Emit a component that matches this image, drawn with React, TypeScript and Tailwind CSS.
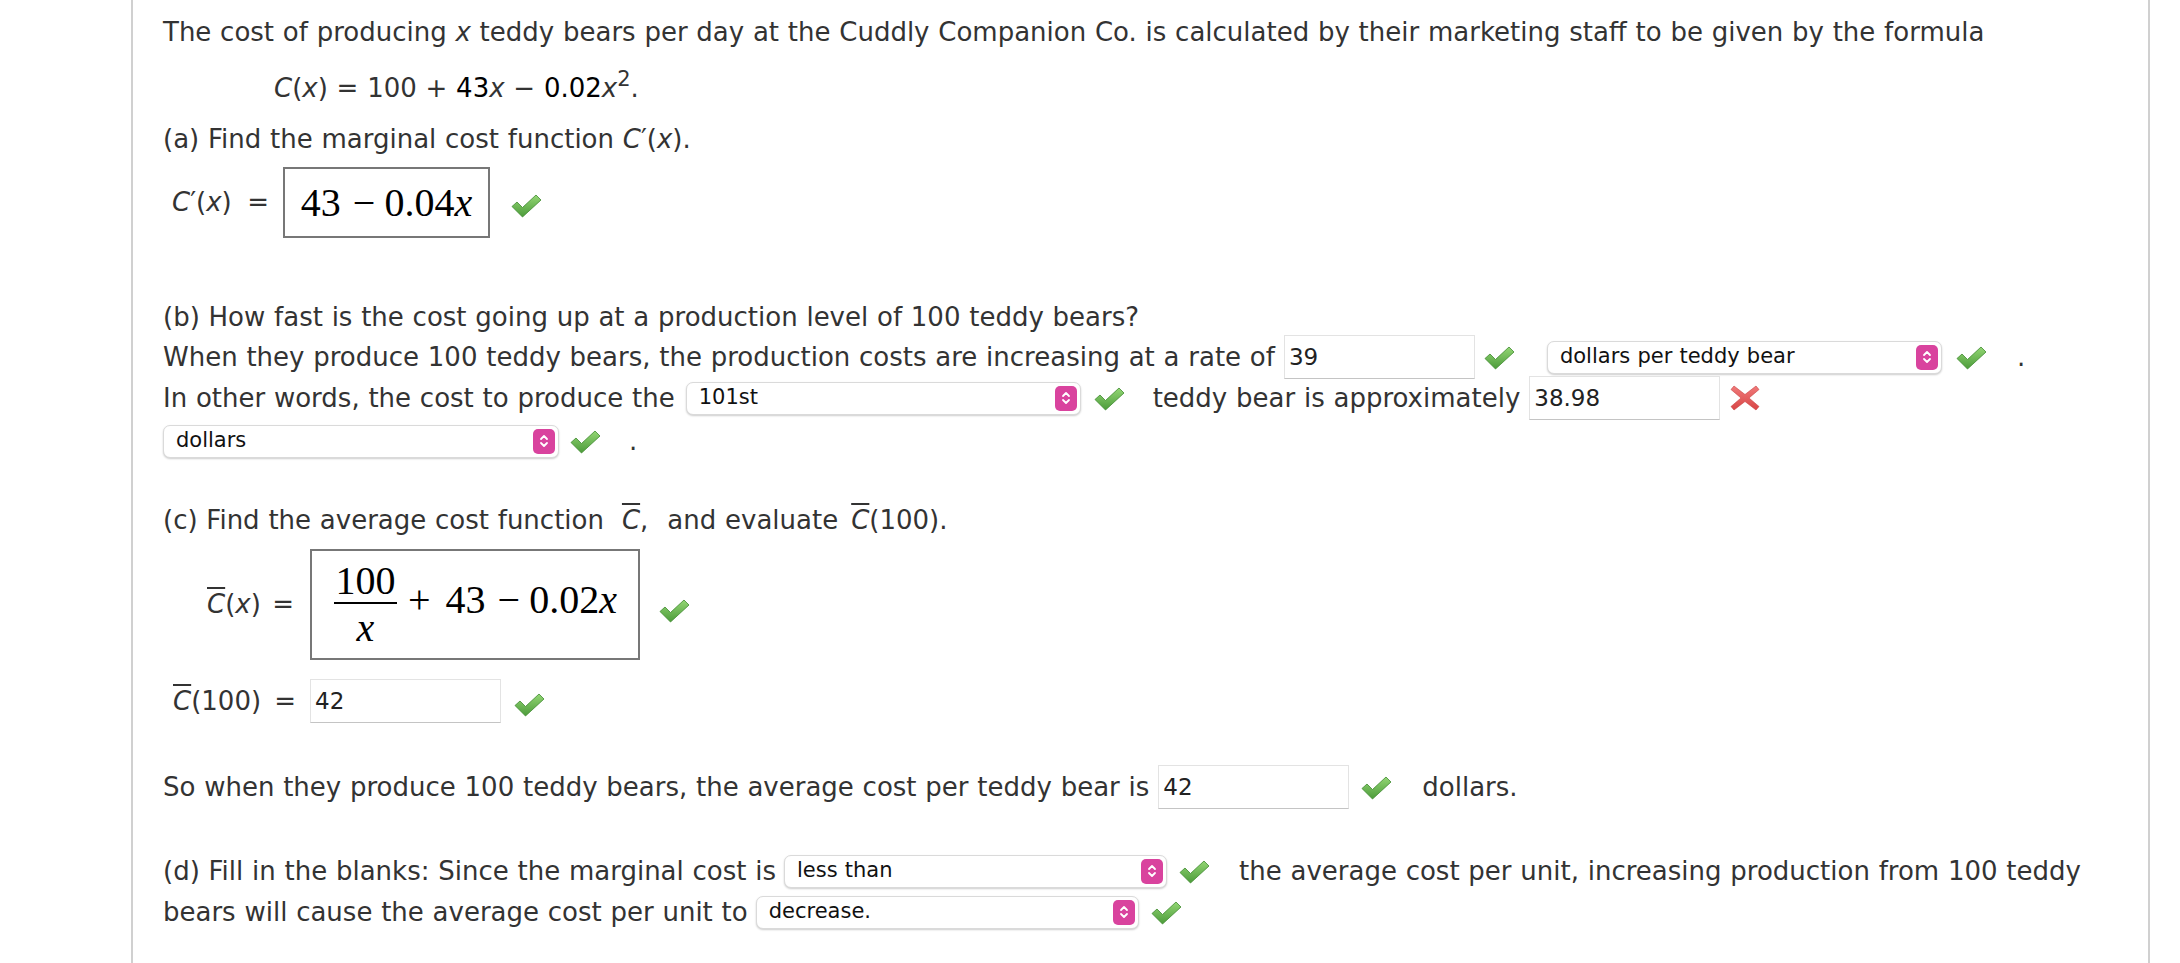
import React from "react";

const Check = ({ className = "" }: { className?: string }) => (
  <svg width="31" height="25" viewBox="0 0 31 25" className={`shrink-0 ${className}`}>
    <defs>
      <linearGradient id="gck" x1="0" y1="0" x2="0" y2="1">
        <stop offset="0" stopColor="#93d674" />
        <stop offset="1" stopColor="#4c9b3a" />
      </linearGradient>
    </defs>
    <polygon
      points="1,13.5 6,9 11.5,14.5 25,2 30,7 11.5,24"
      fill="url(#gck)"
      stroke="#3f8a30"
      strokeWidth="0.8"
      strokeLinejoin="round"
    />
  </svg>
);

const Cross = ({ className = "" }: { className?: string }) => (
  <svg width="30" height="28" viewBox="0 0 30 28" className={`shrink-0 ${className}`}>
    <defs>
      <linearGradient id="gx" x1="0" y1="0" x2="0" y2="1">
        <stop offset="0" stopColor="#f07a7a" />
        <stop offset="1" stopColor="#d84545" />
      </linearGradient>
    </defs>
    <path
      d="M4 2 L15 10.5 L26 2 L29 5.5 L19 14 L29 22.5 L26 26 L15 17.5 L4 26 L1 22.5 L11 14 L1 5.5 Z"
      fill="url(#gx)"
      stroke="#c94040"
      strokeWidth="0.6"
      strokeLinejoin="round"
    />
  </svg>
);

const Select = ({ text, className = "" }: { text: string; className?: string }) => (
  <div
    className={`flex items-center h-[33px] shrink-0 rounded-[7px] bg-white border border-[#dadada] shadow-[0_1px_2px_rgba(0,0,0,0.2)] pl-3 pr-[3px] text-[21px] text-[#111] ${className}`}
  >
    <span className="flex-1 whitespace-nowrap">{text}</span>
    <span className="flex items-center justify-center w-[22px] h-[25px] rounded-[5px] bg-[#d9439e]">
      <svg width="10" height="16" viewBox="0 0 10 16">
        <path d="M2 6 L5 3 L8 6" fill="none" stroke="white" strokeWidth="1.8" strokeLinecap="round" strokeLinejoin="round" />
        <path d="M2 10 L5 13 L8 10" fill="none" stroke="white" strokeWidth="1.8" strokeLinecap="round" strokeLinejoin="round" />
      </svg>
    </span>
  </div>
);

const Input = ({ text, className = "" }: { text: string; className?: string }) => (
  <div
    className={`flex items-center h-[44px] w-[191px] shrink-0 bg-white border border-[#e3e3e3] border-b-[#c4c4c4] pl-[4px] text-[23px] text-[#222] ${className}`}
  >
    {text}
  </div>
);

const Cbar = ({ className = "" }: { className?: string }) => (
  <span className={`italic overline decoration-2 ${className}`}>C</span>
);

export default function App() {
  return (
    <div className="w-[2180px] h-[963px] bg-white overflow-hidden font-['DejaVu_Sans',sans-serif] text-[26px] text-[#333] [word-spacing:0.5px]">
      <div className="ml-[131px] w-[2019px] h-full border-l-2 border-r-2 border-[#d0d0d0] pl-[30px] pt-[12px]">
        {/* intro */}
        <div className="h-[40px] flex items-center whitespace-nowrap">
          The cost of producing&nbsp;<i>x</i>&nbsp;teddy bears per day at the Cuddly Companion Co. is calculated by their marketing staff to be given by the formula
        </div>
        <div className="mt-[16px] h-[40px] flex items-center whitespace-nowrap pl-[111px]">
          <span>
            <i>C</i>(<i>x</i>) = 100 + <span className="text-black">43</span>
            <i>x</i> − <span className="text-black">0.02</span>
            <i>x</i>
            <sup className="text-[21px]">2</sup>.
          </span>
        </div>

        {/* (a) */}
        <div className="mt-[11px] h-[40px] flex items-center whitespace-nowrap">
          <span>
            (a) Find the marginal cost function <i>C</i>′(<i>x</i>).
          </span>
        </div>
        <div className="mt-[8px] h-[71px] flex items-center">
          <div className="w-[120px] flex items-center">
            <span className="ml-[9px]">
              <i>C</i>′(<i>x</i>)
            </span>
            <span className="ml-auto mr-[14px]">=</span>
          </div>
          <div className="flex items-center justify-center h-[71px] w-[207px] border-2 border-[#777] font-['Liberation_Serif',serif] text-[40px] leading-none text-black">
            <span>43</span>
            <span className="ml-[12px] mr-[9px]">−</span>
            <span>0.04</span>
            <span className="italic">x</span>
          </div>
          <Check className="ml-[21px] mt-[6px]" />
        </div>

        {/* (b) */}
        <div className="mt-[59px] h-[40px] flex items-center whitespace-nowrap">
          (b) How fast is the cost going up at a production level of 100 teddy bears?
        </div>
        <div className="h-[40px] flex items-center whitespace-nowrap">
          <span>When they produce 100 teddy bears, the production costs are increasing at a rate of</span>
          <Input text="39" className="ml-[9px]" />
          <Check className="ml-[9px]" />
          <Select text="dollars per teddy bear" className="w-[395px] ml-[32px]" />
          <Check className="ml-[14px]" />
          <span className="ml-[30px]">.</span>
        </div>
        <div className="h-[42px] flex items-center whitespace-nowrap">
          <span>In other words, the cost to produce the</span>
          <Select text="101st" className="w-[395px] ml-[11px]" />
          <Check className="ml-[13px]" />
          <span className="ml-[28px]">teddy bear is approximately</span>
          <Input text="38.98" className="ml-[9px]" />
          <Cross className="ml-[10px]" />
        </div>
        <div className="mt-[4px] h-[36px] flex items-center whitespace-nowrap">
          <Select text="dollars" className="w-[396px]" />
          <Check className="ml-[11px]" />
          <span className="ml-[28px]">.</span>
        </div>

        {/* (c) */}
        <div className="mt-[41px] h-[40px] flex items-center whitespace-nowrap">
          <span>
            (c) Find the average cost function<Cbar className="ml-[18px]" />,<span className="ml-[19px]">and evaluate</span>
            <Cbar className="ml-[13px]" />
            (100).
          </span>
        </div>
        <div className="mt-[9px] h-[111px] flex items-center">
          <div className="w-[147px] flex items-center">
            <span className="ml-[44px]">
              <Cbar />(<i>x</i>)
            </span>
            <span className="ml-auto mr-[16px]">=</span>
          </div>
          <div className="flex items-center h-[111px] w-[330px] border-2 border-[#777] pl-[22px] font-['Liberation_Serif',serif] text-[40px] leading-none text-black">
            <div className="flex flex-col items-center">
              <span className="h-[40px] mb-[1px]">100</span>
              <span className="w-[63px] h-[2px] bg-black" />
              <span className="h-[40px] mt-[4px] italic">x</span>
            </div>
            <span className="flex items-center mb-[10px]">
              <span className="ml-[11px] mr-[15px]">+</span>
              <span>43</span>
              <span className="ml-[12px] mr-[9px]">−</span>
              <span>0.02</span>
              <span className="italic">x</span>
            </span>
          </div>
          <Check className="ml-[19px] mt-[12px]" />
        </div>
        <div className="mt-[19px] h-[44px] flex items-center">
          <div className="w-[147px] flex items-center">
            <span className="ml-[10px]">
              <Cbar />(100)
            </span>
            <span className="ml-auto mr-[14px]">=</span>
          </div>
          <Input text="42" />
          <Check className="ml-[13px] mt-[6px]" />
        </div>

        <div className="mt-[42px] h-[44px] flex items-center whitespace-nowrap">
          <span>So when they produce 100 teddy bears, the average cost per teddy bear is</span>
          <Input text="42" className="ml-[9px]" />
          <Check className="ml-[12px]" />
          <span className="ml-[30px]">dollars.</span>
        </div>

        {/* (d) */}
        <div className="mt-[42px] h-[40px] flex items-center whitespace-nowrap">
          <span>(d) Fill in the blanks: Since the marginal cost is</span>
          <Select text="less than" className="w-[383px] ml-[8px]" />
          <Check className="ml-[12px]" />
          <span className="ml-[29px]">the average cost per unit, increasing production from 100 teddy</span>
        </div>
        <div className="mt-[1px] h-[40px] flex items-center whitespace-nowrap">
          <span>bears will cause the average cost per unit to</span>
          <Select text="decrease." className="w-[383px] ml-[8px]" />
          <Check className="ml-[12px]" />
        </div>
      </div>
    </div>
  );
}
